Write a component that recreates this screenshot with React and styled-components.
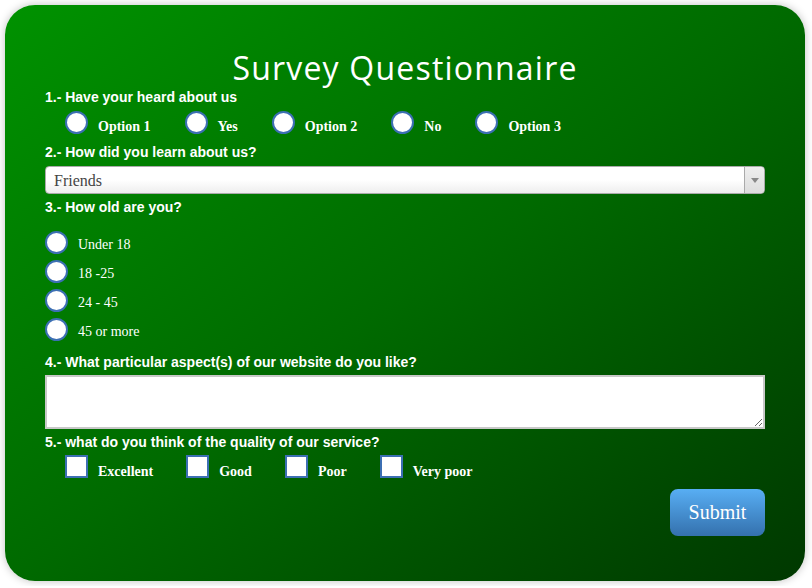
import styled, { createGlobalStyle } from "styled-components";

const Global = createGlobalStyle`
  html, body {
    margin: 0;
    padding: 0;
    background: #ffffff;
  }
  * {
    box-sizing: border-box;
  }
`;

const Panel = styled.form`
  margin: 5px;
  width: 800px;
  height: 576px;
  border-radius: 30px;
  padding: 43px 40px 0 40px;
  background: linear-gradient(to bottom right, #009200 0%, #006a00 50%, #003800 100%);
  box-shadow: 0 0 8px rgba(0, 0, 0, 0.25);
  display: flex;
  flex-direction: column;
`;

const Title = styled.h1`
  margin: 0;
  text-align: center;
  font-family: "Open Sans", sans-serif;
  font-weight: 400;
  font-size: 32px;
  letter-spacing: 1.2px;
  line-height: 40px;
  color: #ffffff;
`;

const Question = styled.div`
  font-family: "Liberation Sans", Arial, sans-serif;
  font-weight: 700;
  font-size: 14px;
  line-height: 16px;
  color: #ffffff;
  margin-top: ${(p) => p.top || 0}px;
`;

const Row = styled.div`
  display: flex;
  align-items: center;
  gap: ${(p) => p.gap}px;
  padding-left: 20px;
  margin-top: ${(p) => p.top || 0}px;
`;

const Column = styled.div`
  display: flex;
  flex-direction: column;
  gap: 5px;
  margin-top: 15px;
`;

const Choice = styled.label`
  display: flex;
  align-items: center;
  gap: 10px;
  font-family: "Liberation Serif", "Times New Roman", serif;
  font-weight: ${(p) => (p.bold ? 700 : 400)};
  font-size: 14px;
  color: #ffffff;
  height: 24px;
`;

const ChoiceText = styled.span`
  position: relative;
  top: ${(p) => p.shift || 0}px;
`;

const Radio = styled.input.attrs({ type: "radio" })`
  appearance: none;
  margin: 0;
  width: 23px;
  height: 23px;
  border-radius: 50%;
  background: #ffffff;
  border: 2px solid #3c6fb3;
  flex: none;
`;

const Check = styled.input.attrs({ type: "checkbox" })`
  appearance: none;
  margin: 0;
  width: 23px;
  height: 23px;
  background: #ffffff;
  border: 2px solid #3c6fb3;
  flex: none;
`;

const SelectWrap = styled.div`
  position: relative;
  margin-top: 6px;
  height: 28px;
`;

const Select = styled.select`
  appearance: none;
  width: 100%;
  height: 28px;
  margin: 0;
  padding: 0 0 0 8px;
  border: 1px solid #aaaaaa;
  border-radius: 4px;
  background: linear-gradient(#ffffff 0%, #ffffff 50%, #eeeeee 100%);
  font-family: "Liberation Serif", "Times New Roman", serif;
  font-size: 16px;
  color: #444444;
`;

const Arrow = styled.div`
  position: absolute;
  top: 1px;
  right: 1px;
  width: 20px;
  height: 26px;
  border-left: 1px solid #aaaaaa;
  border-radius: 0 4px 4px 0;
  background: linear-gradient(#eeeeee, #dddddd);
  pointer-events: none;
  &::after {
    content: "";
    position: absolute;
    left: 6px;
    top: 11px;
    border-left: 4px solid transparent;
    border-right: 4px solid transparent;
    border-top: 5px solid #888888;
  }
`;

const TextArea = styled.textarea`
  display: block;
  width: 100%;
  height: 54px;
  margin-top: 5px;
  border: 2px solid #c8c8c8;
  background: #ffffff;
  resize: vertical;
`;

const Footer = styled.div`
  display: flex;
  justify-content: flex-end;
  margin-top: 11px;
`;

const Submit = styled.button`
  width: 95px;
  height: 47px;
  border: none;
  border-radius: 8px;
  background: linear-gradient(#58aef4, #3471ad);
  color: #ffffff;
  font-family: "Liberation Serif", "Times New Roman", serif;
  font-size: 20px;
`;

const heard = ["Option 1", "Yes", "Option 2", "No", "Option 3"];
const ages = ["Under 18", "18 -25", "24 - 45", "45 or more"];
const quality = ["Excellent", "Good", "Poor", "Very poor"];

export default function App() {
  return (
    <>
      <Global />
      <Panel onSubmit={(e) => e.preventDefault()}>
        <Title>Survey Questionnaire</Title>
        <Question top={1}>1.- Have your heard about us</Question>
        <Row gap={34} top={5}>
          {heard.map((h) => (
            <Choice bold key={h}>
              <Radio name="heard" />
              <ChoiceText shift={5}>{h}</ChoiceText>
            </Choice>
          ))}
        </Row>
        <Question top={10}>2.- How did you learn about us?</Question>
        <SelectWrap>
          <Select defaultValue="Friends">
            <option>Friends</option>
            <option>Internet</option>
            <option>Other</option>
          </Select>
          <Arrow />
        </SelectWrap>
        <Question top={5}>3.- How old are you?</Question>
        <Column>
          {ages.map((a) => (
            <Choice key={a}>
              <Radio name="age" />
              <ChoiceText shift={3}>{a}</ChoiceText>
            </Choice>
          ))}
        </Column>
        <Question top={13}>4.- What particular aspect(s) of our website do you like?</Question>
        <TextArea />
        <Question top={5}>5.- what do you think of the quality of our service?</Question>
        <Row gap={33} top={4}>
          {quality.map((q) => (
            <Choice bold key={q}>
              <Check />
              <ChoiceText shift={6}>{q}</ChoiceText>
            </Choice>
          ))}
        </Row>
        <Footer>
          <Submit type="submit">Submit</Submit>
        </Footer>
      </Panel>
    </>
  );
}
